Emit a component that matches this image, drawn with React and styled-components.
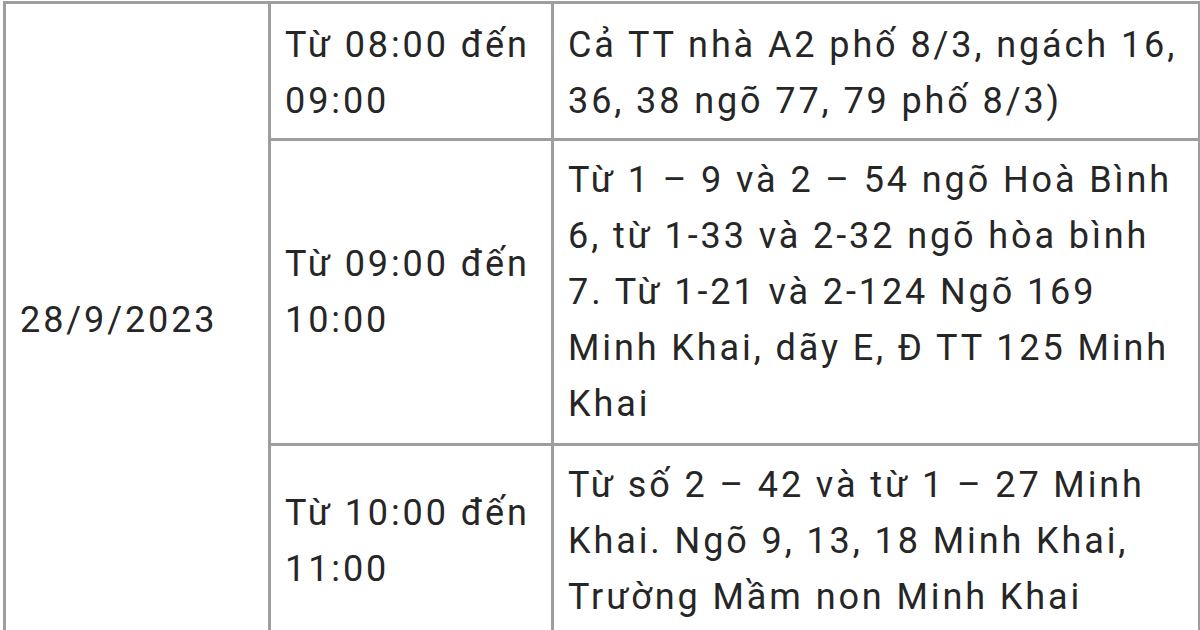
import React from 'react';
import styled, { createGlobalStyle } from 'styled-components';

const GlobalStyle = createGlobalStyle`
  html, body {
    margin: 0;
    padding: 0;
    background: #fff;
  }
  body {
    width: 1200px;
    height: 630px;
    overflow: hidden;
  }
`

const Frame = styled.div`
  width: 1200px;
  height: 630px;
  overflow: hidden;
  padding: 1px 0 0 3px;
  box-sizing: border-box;
`

const Table = styled.table`
  border-collapse: collapse;
  table-layout: fixed;
  width: 1195px;
  font-family: Roboto, "Liberation Sans", sans-serif;
  color: #262626;
`

const Col = styled.col`
  width: ${p => p.$w}px;
`

const Cell = styled.td`
  border: 3px solid #9e9e9e;
  padding: ${p => (p.$first ? '13px 14px 9px' : '11px 14px')};
  font-size: 36px;
  line-height: 56px;
  letter-spacing: 2.9px;
  vertical-align: middle;
  white-space: nowrap;
  overflow: hidden;
`

const rows = [
  {
    time: ['Từ 08:00 đến', '09:00'],
    place: ['Cả TT nhà A2 phố 8/3, ngách 16,', '36, 38 ngõ 77, 79 phố 8/3)'],
  },
  {
    time: ['Từ 09:00 đến', '10:00'],
    place: [
      'Từ 1 – 9 và 2 – 54 ngõ Hoà Bình',
      '6, từ 1-33 và 2-32 ngõ hòa bình',
      '7. Từ 1-21 và 2-124 Ngõ 169',
      'Minh Khai, dãy E, Đ TT 125 Minh',
      'Khai',
    ],
  },
  {
    time: ['Từ 10:00 đến', '11:00'],
    place: [
      'Từ số 2 – 42 và từ 1 – 27 Minh',
      'Khai. Ngõ 9, 13, 18 Minh Khai,',
      'Trường Mầm non Minh Khai',
    ],
  },
]

const Lines = ({ lines }) =>
  lines.map((l, i) => (
    <React.Fragment key={i}>
      {i > 0 && <br />}
      {l}
    </React.Fragment>
  ))

export default function App() {
  return (
    <>
      <GlobalStyle />
      <Frame>
        <Table>
          <colgroup>
            <Col $w={265} />
            <Col $w={283} />
            <Col $w={647} />
          </colgroup>
          <tbody>
            {rows.map((r, i) => (
              <tr key={i}>
                {i === 0 && <Cell rowSpan={3}>28/9/2023</Cell>}
                <Cell $first={i === 0}>
                  <Lines lines={r.time} />
                </Cell>
                <Cell $first={i === 0}>
                  <Lines lines={r.place} />
                </Cell>
              </tr>
            ))}
          </tbody>
        </Table>
      </Frame>
    </>
  )
}
